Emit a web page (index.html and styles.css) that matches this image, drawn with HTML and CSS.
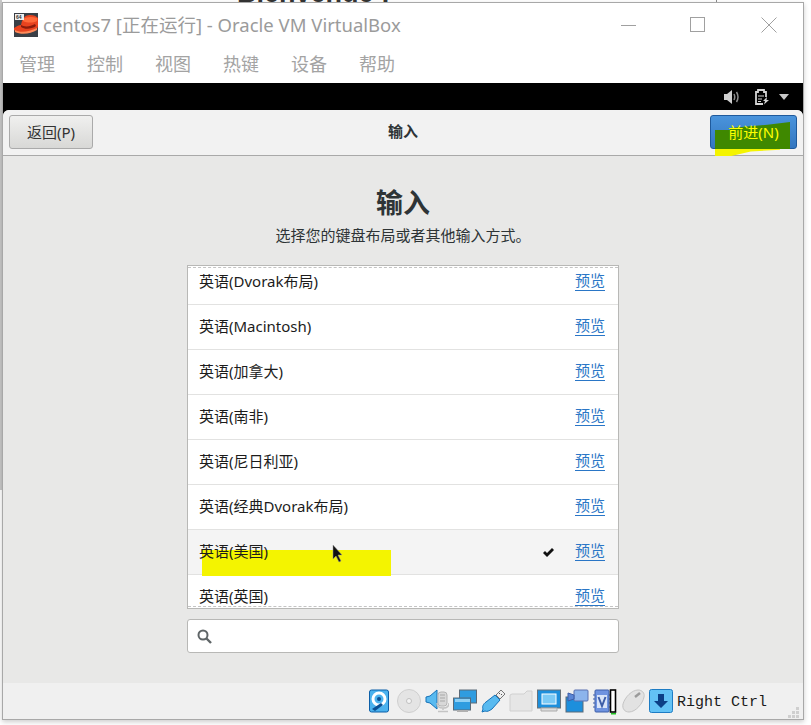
FILE: index.html
```html
<!DOCTYPE html>
<html>
<head>
  <meta charset="utf-8"/>
  <title>centos7 [正在运行] - Oracle VM VirtualBox</title>
  <link rel="stylesheet" href="styles.css">
</head>
<body>
  <!-- 背后的窗口 -->
  <div class="behind"><span class="behind-text">Bienvenue !</span></div>

  <div class="window">
    <div class="titlebar">
      <svg class="app-icon" width="24" height="24" viewBox="0 0 24 24">
        <rect width="24" height="24" fill="#3a3f46"/>
        <path d="M0 15c3-2 5-3 7-3 1-5 3-10 9-10 4 0 6 1 8 3v8c0 4-7 7-13 7-5 0-9-1-11-3z" fill="#e8431f"/>
        <path d="M7 12c3 2 9 2 14-1l1 2c-4 3-11 4-15 1z" fill="#8a1c0c"/>
        <path d="M9 6c3-2 8-3 14-1v3c-4 2-10 2-14 0z" fill="#ff6a3a"/>
        <path d="M1 17c5 3 14 2 22-2v2c-6 4-16 5-22 2z" fill="#ff8a5a"/>
        <rect x="1" y="1" width="9" height="6" fill="#eee"/>
        <text x="2" y="6" class="app-icon-text">64</text>
      </svg>
      <span class="title">centos7 [正在运行] - Oracle VM VirtualBox</span>
      <div class="winbtns">
        <svg class="win-min" width="16" height="16" viewBox="0 0 16 16"><path d="M0 8.500h15" stroke="#a0a0a0" fill="none"/></svg>
        <svg width="16" height="16" viewBox="0 0 16 16"><rect x="1.500" y=".5" width="14" height="14" stroke="#a0a0a0" fill="none"/></svg>
        <svg width="16" height="16" viewBox="0 0 16 16"><path d="M.5.5l15 15M15.500.5l-15 15" stroke="#a0a0a0" fill="none"/></svg>
      </div>
    </div>
    <div class="menubar">
      <span>管理</span><span>控制</span><span>视图</span><span>热键</span><span>设备</span><span>帮助</span>
    </div>

    <div class="guest">
      <div class="topbar">
        <svg class="top-sound" width="16" height="16" viewBox="0 0 16 16">
          <path d="M0 5h3l5-4v14l-5-4H0z" fill="#cfcfcf"/>
          <path d="M10 5c1 2 1 4 0 6M12.500 3c1.800 3 1.800 7 0 10" stroke="#8c8c8c" stroke-width="1.500" fill="none"/>
        </svg>
        <svg class="top-doc" width="16" height="16" viewBox="0 0 16 16">
          <path d="M12 8V3H10V1H4V3H2V15H9" fill="none" stroke="#d4d4d4" stroke-width="1.800"/>
          <path d="M4 7h6M4 10h4M4 12.500h3" stroke="#d4d4d4" stroke-width="1.200"/>
          <path d="M13 8l-4 4h2l-1 3.500 5-4.500h-2.500z" fill="#d4d4d4"/>
        </svg>
        <svg width="10" height="6" viewBox="0 0 10 6"><path d="M0 0h10L5 6z" fill="#c8c8c8"/></svg>
      </div>

      <div class="installer">
        <div class="header">
          <button class="btn">返回(P)</button>
          <b class="header-title">输入</b>
          <button class="btn btn-next">
            <i class="mark mark-next"></i>
            <i class="mark mark-next-dark"></i>
            <span class="btn-label">前进(N)</span>
          </button>
        </div>

        <div class="content">
          <h1>输入</h1>
          <p class="sub">选择您的键盘布局或者其他输入方式。</p>

          <div class="layout-list">
            <div class="rows">
              <div class="row"><span>英语(Dvorak布局)</span><a href="#">预览</a></div>
              <div class="row"><span>英语(Macintosh)</span><a href="#">预览</a></div>
              <div class="row"><span>英语(加拿大)</span><a href="#">预览</a></div>
              <div class="row"><span>英语(南非)</span><a href="#">预览</a></div>
              <div class="row"><span>英语(尼日利亚)</span><a href="#">预览</a></div>
              <div class="row"><span>英语(经典Dvorak布局)</span><a href="#">预览</a></div>
              <div class="row selected">
                <i class="mark mark-row"></i>
                <span>英语(美国)</span>
                <svg class="check" width="11" height="9" viewBox="0 0 11 9"><path d="M0 5l2-2 2 2 5-5 2 2-7 7z" fill="#111"/></svg>
                <a href="#">预览</a>
              </div>
              <div class="row"><span>英语(英国)</span><a href="#">预览</a></div>
            </div>
            <div class="dash dash-top"></div>
            <div class="dash dash-bottom"></div>
          </div>

          <div class="search">
            <svg width="15" height="15" viewBox="0 0 15 15"><circle cx="6" cy="6" r="4.500" fill="none" stroke="#5f6567" stroke-width="2"/><path d="M9.500 9.500l4.500 4.500" stroke="#5f6567" stroke-width="2.400"/></svg>
          </div>
        </div>
      </div>
    </div>

    <div class="statusbar">
      <div class="icons">
        <!-- 硬盘 -->
        <svg class="ico-hd" width="20" height="24" viewBox="0 0 20 24">
          <rect x=".5" y="1" width="19" height="22" rx="2" fill="#4bb2ee" stroke="#0b5fa8"/>
          <circle cx="10" cy="10" r="6" fill="none" stroke="#fff" stroke-width="3"/>
          <circle cx="10" cy="10" r="2" fill="#0b4f92"/>
          <path d="M3 20l9-6 2 2-8 6z" fill="#0b4f92"/>
        </svg>
        <!-- 光盘 -->
        <svg width="24" height="24" viewBox="0 0 24 24">
          <circle cx="12" cy="12" r="11.500" fill="#e4e4e4" stroke="#cfcfcf"/>
          <circle cx="12" cy="12" r="2.500" fill="#f4f4f4" stroke="#c0c0c0"/>
        </svg>
        <!-- 声音 -->
        <svg width="24" height="24" viewBox="0 0 24 24">
          <path d="M1 8l4-1 7-6v19l-7-6-4-1z" fill="#58baf0" stroke="#1672b8"/>
          <rect x="13" y="3" width="9" height="14" rx="3" fill="#d8d8d8" stroke="#b4b4b4"/>
          <path d="M15 6h5M15 9h5M15 12h5" stroke="#a8a8a8"/>
          <path d="M12 14c0 4 3 5 6 5s6-1 6-5M18 19v2M13 22.500h10" stroke="#c4c4c4" stroke-width="1.500" fill="none"/>
        </svg>
        <!-- 网络 -->
        <svg width="24" height="24" viewBox="0 0 24 24">
          <rect x="6.500" y="1" width="17" height="13" fill="#2f9ce0" stroke="#5a6a78"/>
          <rect x=".5" y="9" width="17" height="12" fill="#2f9ce0" stroke="#5a6a78"/>
          <rect x="2" y="10" width="15" height="3" fill="#8fd0f5"/>
          <rect x="4" y="21" width="11" height="2" fill="#b0b0b0"/>
        </svg>
        <!-- USB -->
        <svg width="24" height="24" viewBox="0 0 24 24">
          <path d="M14 6l5 5-8 9c-3 2-5 3-7 2l-3 1 1-3c-1-2 0-5 3-7z" fill="#58baf0" stroke="#1672b8"/>
          <path d="M15 6l5-5 4 4-5 5z" fill="#eee" stroke="#777"/>
          <path d="M18 4l1 1M20 6l1-1" stroke="#555"/>
        </svg>
        <!-- 共享文件夹 -->
        <svg width="24" height="24" viewBox="0 0 24 24">
          <path d="M1 6l2-1h12l3-3h5v20H1z" fill="#e6e6e6" stroke="#d0d0d0"/>
        </svg>
        <!-- 显示 -->
        <svg width="24" height="24" viewBox="0 0 24 24">
          <rect x=".5" y="1" width="23" height="18" fill="#1d8fdc" stroke="#68727a"/>
          <rect x="5" y="5" width="14" height="10" fill="#7ccaf5" stroke="#fff"/>
          <path d="M4 19h16v3H4z" fill="#ddd" stroke="#aaa"/>
        </svg>
        <!-- 录像 -->
        <svg width="24" height="24" viewBox="0 0 24 24">
          <rect x="1" y="8" width="17" height="15" fill="#1d8fdc" stroke="#5a6a78"/>
          <rect x="9" y="1" width="14" height="11" rx="1" fill="#8cb4ec" stroke="#5a70b0"/>
          <path d="M3 4l6 2v4l-6 2z" fill="#5a86d6" stroke="#3e5ea8"/>
        </svg>
        <!-- 虚拟化 -->
        <svg class="ico-v" width="24" height="26" viewBox="0 0 24 26">
          <rect x="2" y="1" width="14" height="22" rx="1" fill="#6f93e0" stroke="#3e5ea8"/>
          <path d="M0 6h2M0 10h2M0 14h2M0 18h2M16 6h2M16 10h2M16 14h2M16 18h2" stroke="#3e5ea8"/>
          <rect x="4" y="6" width="10" height="13" fill="#d9e4f8"/>
          <path d="M5.500 8L9 17l3.500-9" stroke="#3e5ea8" stroke-width="2" fill="none"/>
          <rect x="17.500" y="1" width="5" height="22" fill="#fff" stroke="#000" stroke-width="1.600"/>
          <rect x="18" y="24" width="5" height="1.500" fill="#22c322"/>
        </svg>
        <!-- 鼠标 -->
        <svg width="24" height="24" viewBox="0 0 24 24">
          <path d="M2 15C4 8 11 1 17 1c4 0 7 3 6 7-1 6-8 15-15 15-4 0-7-3-6-8z" fill="#e2e2e2" stroke="#c4c4c4"/>
          <path d="M14 8l5-4" stroke="#9a9a9a" stroke-width="2.500"/>
        </svg>
        <!-- 键盘捕获 -->
        <svg width="24" height="24" viewBox="0 0 24 24">
          <rect x=".5" y=".5" width="23" height="23" rx="2" fill="#63c2f5" stroke="#1d7cc4"/>
          <path d="M9 5h6v7h4l-7 7-7-7h4z" fill="#0c3f86"/>
        </svg>
      </div>
      <span class="hostkey">Right Ctrl</span>
      <svg class="grip" width="11" height="11" viewBox="0 0 11 11">
        <path d="M8 0h3v3H8zM4 4h3v3H4zM8 4h3v3H8zM0 8h3v3H0zM4 8h3v3H4zM8 8h3v3H8z" fill="#cfcfcf"/>
      </svg>
    </div>
  </div>

  <!-- 鼠标指针 -->
  <svg class="cursor" width="12" height="20" viewBox="0 0 12 20"><path d="M1 1v14l3-3 3 6 2-1-3-6h4z" fill="#111" stroke="#999" stroke-width=".5"/></svg>
</body>
</html>
```

FILE: styles.css
```css
* {
  box-sizing: border-box;
}
body {
  margin: 0;
  height: 725px;
  overflow: hidden;
  position: relative;
  background: #fff;
  font-family: "Noto Sans", "Noto Sans CJK SC", sans-serif;
}
.behind {
  position: absolute;
  left: 0;
  top: 0;
  width: 717px;
  height: 490px;
  background: #fff;
  border-left: 2px solid #c8c8c8;
  border-right: 1px solid #8a8a8a;
  overflow: hidden;
}
.behind-text {
  position: absolute;
  left: 235px;
  top: -22px;
  font-family: "Liberation Sans", sans-serif;
  font-size: 27px;
  line-height: 30px;
  font-weight: bold;
  color: #333;
  white-space: nowrap;
}
.window {
  position: absolute;
  left: 2px;
  top: 2px;
  width: 802px;
  height: 718px;
  display: flex;
  flex-direction: column;
  background: #fff;
  border: 1px solid #a8a8a8;
  box-shadow: 0 2px 5px rgba(0, 0, 0, 0.2);
}
.titlebar {
  height: 45px;
  flex: none;
  display: flex;
  align-items: center;
  padding-left: 11px;
  padding-bottom: 2px;
}
.app-icon-text {
  font-family: "Liberation Sans", sans-serif;
  font-size: 5px;
  font-weight: bold;
  fill: #333;
}
.title {
  margin-left: 5px;
  margin-bottom: 2px;
  font-size: 18.5px;
  color: #9b9b9b;
  white-space: nowrap;
}
.winbtns {
  margin-left: auto;
  margin-right: 26px;
  display: flex;
  gap: 56px;
}
.win-min {
  margin-right: -4px;
}
.menubar {
  height: 35px;
  flex: none;
  display: flex;
  gap: 32px;
  padding-left: 16px;
  font-size: 18px;
  line-height: 33px;
  color: #a3a3a3;
}
.guest {
  flex: 1;
  display: flex;
  flex-direction: column;
  background: #000;
  min-height: 0;
}
.topbar {
  height: 27px;
  flex: none;
  display: flex;
  align-items: center;
  justify-content: flex-end;
  padding-right: 14px;
}
.top-sound {
  margin-right: 14px;
}
.top-doc {
  margin-right: 9px;
}
.installer {
  flex: 1;
  display: flex;
  flex-direction: column;
  background: #e8e8e7;
  border-radius: 6px 6px 0 0;
  min-height: 0;
}
.header {
  height: 46px;
  flex: none;
  display: flex;
  align-items: center;
  justify-content: space-between;
  padding: 0 6px 1px 6px;
  background: #f2f2f2;
  border-bottom: 1px solid #a9a9a9;
  border-radius: 6px 6px 0 0;
  position: relative;
}
.header-title {
  position: absolute;
  left: 0;
  right: 0;
  top: 11px;
  text-align: center;
  font-size: 15px;
  line-height: 20px;
  color: #2e3436;
}
.btn {
  width: 84px;
  height: 34px;
  padding: 0 0 2px;
  border: 1px solid #aaa;
  border-radius: 3px;
  background: linear-gradient(#f0f0ef, #d8d8d6);
  color: #333;
  font-family: inherit;
  font-size: 15px;
  position: relative;
}
.btn-next {
  width: 87px;
  padding-left: 0;
  border-color: #1f5a9c;
  background: linear-gradient(#4a94dc, #3376c0);
  color: #ff0;
}
.btn-label {
  position: relative;
  z-index: 1;
}
.mark {
  position: absolute;
  display: block;
}
.mark-next {
  left: 4px;
  top: 33px;
  width: 65px;
  height: 7px;
  background: #f4f400;
  clip-path: polygon(0 0, 100% 0, 100% 10%, 55% 35%, 25% 100%, 0 100%);
}
.mark-next-dark {
  left: 4px;
  top: 6px;
  width: 75px;
  height: 27px;
  background: #3f8800;
  clip-path: polygon(0 30%, 20% 30%, 20% 22%, 70% 10%, 100% 0, 100% 100%, 0 100%);
}
.content {
  flex: 1;
  display: flex;
  flex-direction: column;
  align-items: center;
  min-height: 0;
}
.content h1 {
  margin: 28px 0 0;
  font-size: 27px;
  line-height: 38px;
  color: #2e3436;
}
.sub {
  margin: 3px 0 1px;
  font-size: 15px;
  line-height: 20px;
  color: #2e3436;
}
.layout-list {
  margin-top: 19px;
  width: 432px;
  height: 344px;
  flex: none;
  position: relative;
  overflow: hidden;
  background: #fff;
  border: 1px solid #b8b8b6;
}
.rows {
  margin-top: -6px;
}
.row {
  height: 45px;
  display: flex;
  align-items: center;
  padding: 0 13px 3px 11px;
  border-bottom: 1px solid #e2e2e1;
  font-size: 15px;
  color: #1c1c1c;
}
.row span {
  flex: 1;
  position: relative;
  z-index: 1;
}
.row a {
  color: #2a76c6;
  text-decoration: none;
  border-bottom: 1px solid #2a76c6;
  line-height: 20px;
}
.selected {
  background: #f4f4f4;
  position: relative;
}
.mark-row {
  left: 14px;
  top: 20px;
  width: 189px;
  height: 26px;
  background: #f4f400;
}
.check {
  margin: 3px 21px 0 0;
}
.dash {
  position: absolute;
  left: 0;
  right: 0;
  border-top: 1px dashed #c4c4c4;
}
.dash-top {
  top: 1px;
}
.dash-bottom {
  bottom: 1px;
}
.search {
  margin-top: 10px;
  width: 432px;
  height: 34px;
  flex: none;
  display: flex;
  align-items: center;
  padding-left: 9px;
  background: #fff;
  border: 1px solid #b8b8b6;
  border-radius: 3px;
}
.statusbar {
  height: 36px;
  flex: none;
  display: flex;
  align-items: center;
  padding-left: 366px;
  padding-right: 4px;
  background: #f0f0f0;
}
.icons {
  display: flex;
  align-items: center;
  gap: 4px;
  margin-right: 4px;
}
.ico-hd {
  margin-right: 4px;
}
.ico-v {
  margin-top: 2px;
}
.hostkey {
  margin-top: 3px;
  font-family: "Liberation Mono", monospace;
  font-size: 15px;
  color: #1a1a1a;
  white-space: nowrap;
}
.grip {
  margin-left: auto;
  align-self: flex-end;
  margin-bottom: 1px;
}
.cursor {
  position: absolute;
  left: 332px;
  top: 544px;
}
```
